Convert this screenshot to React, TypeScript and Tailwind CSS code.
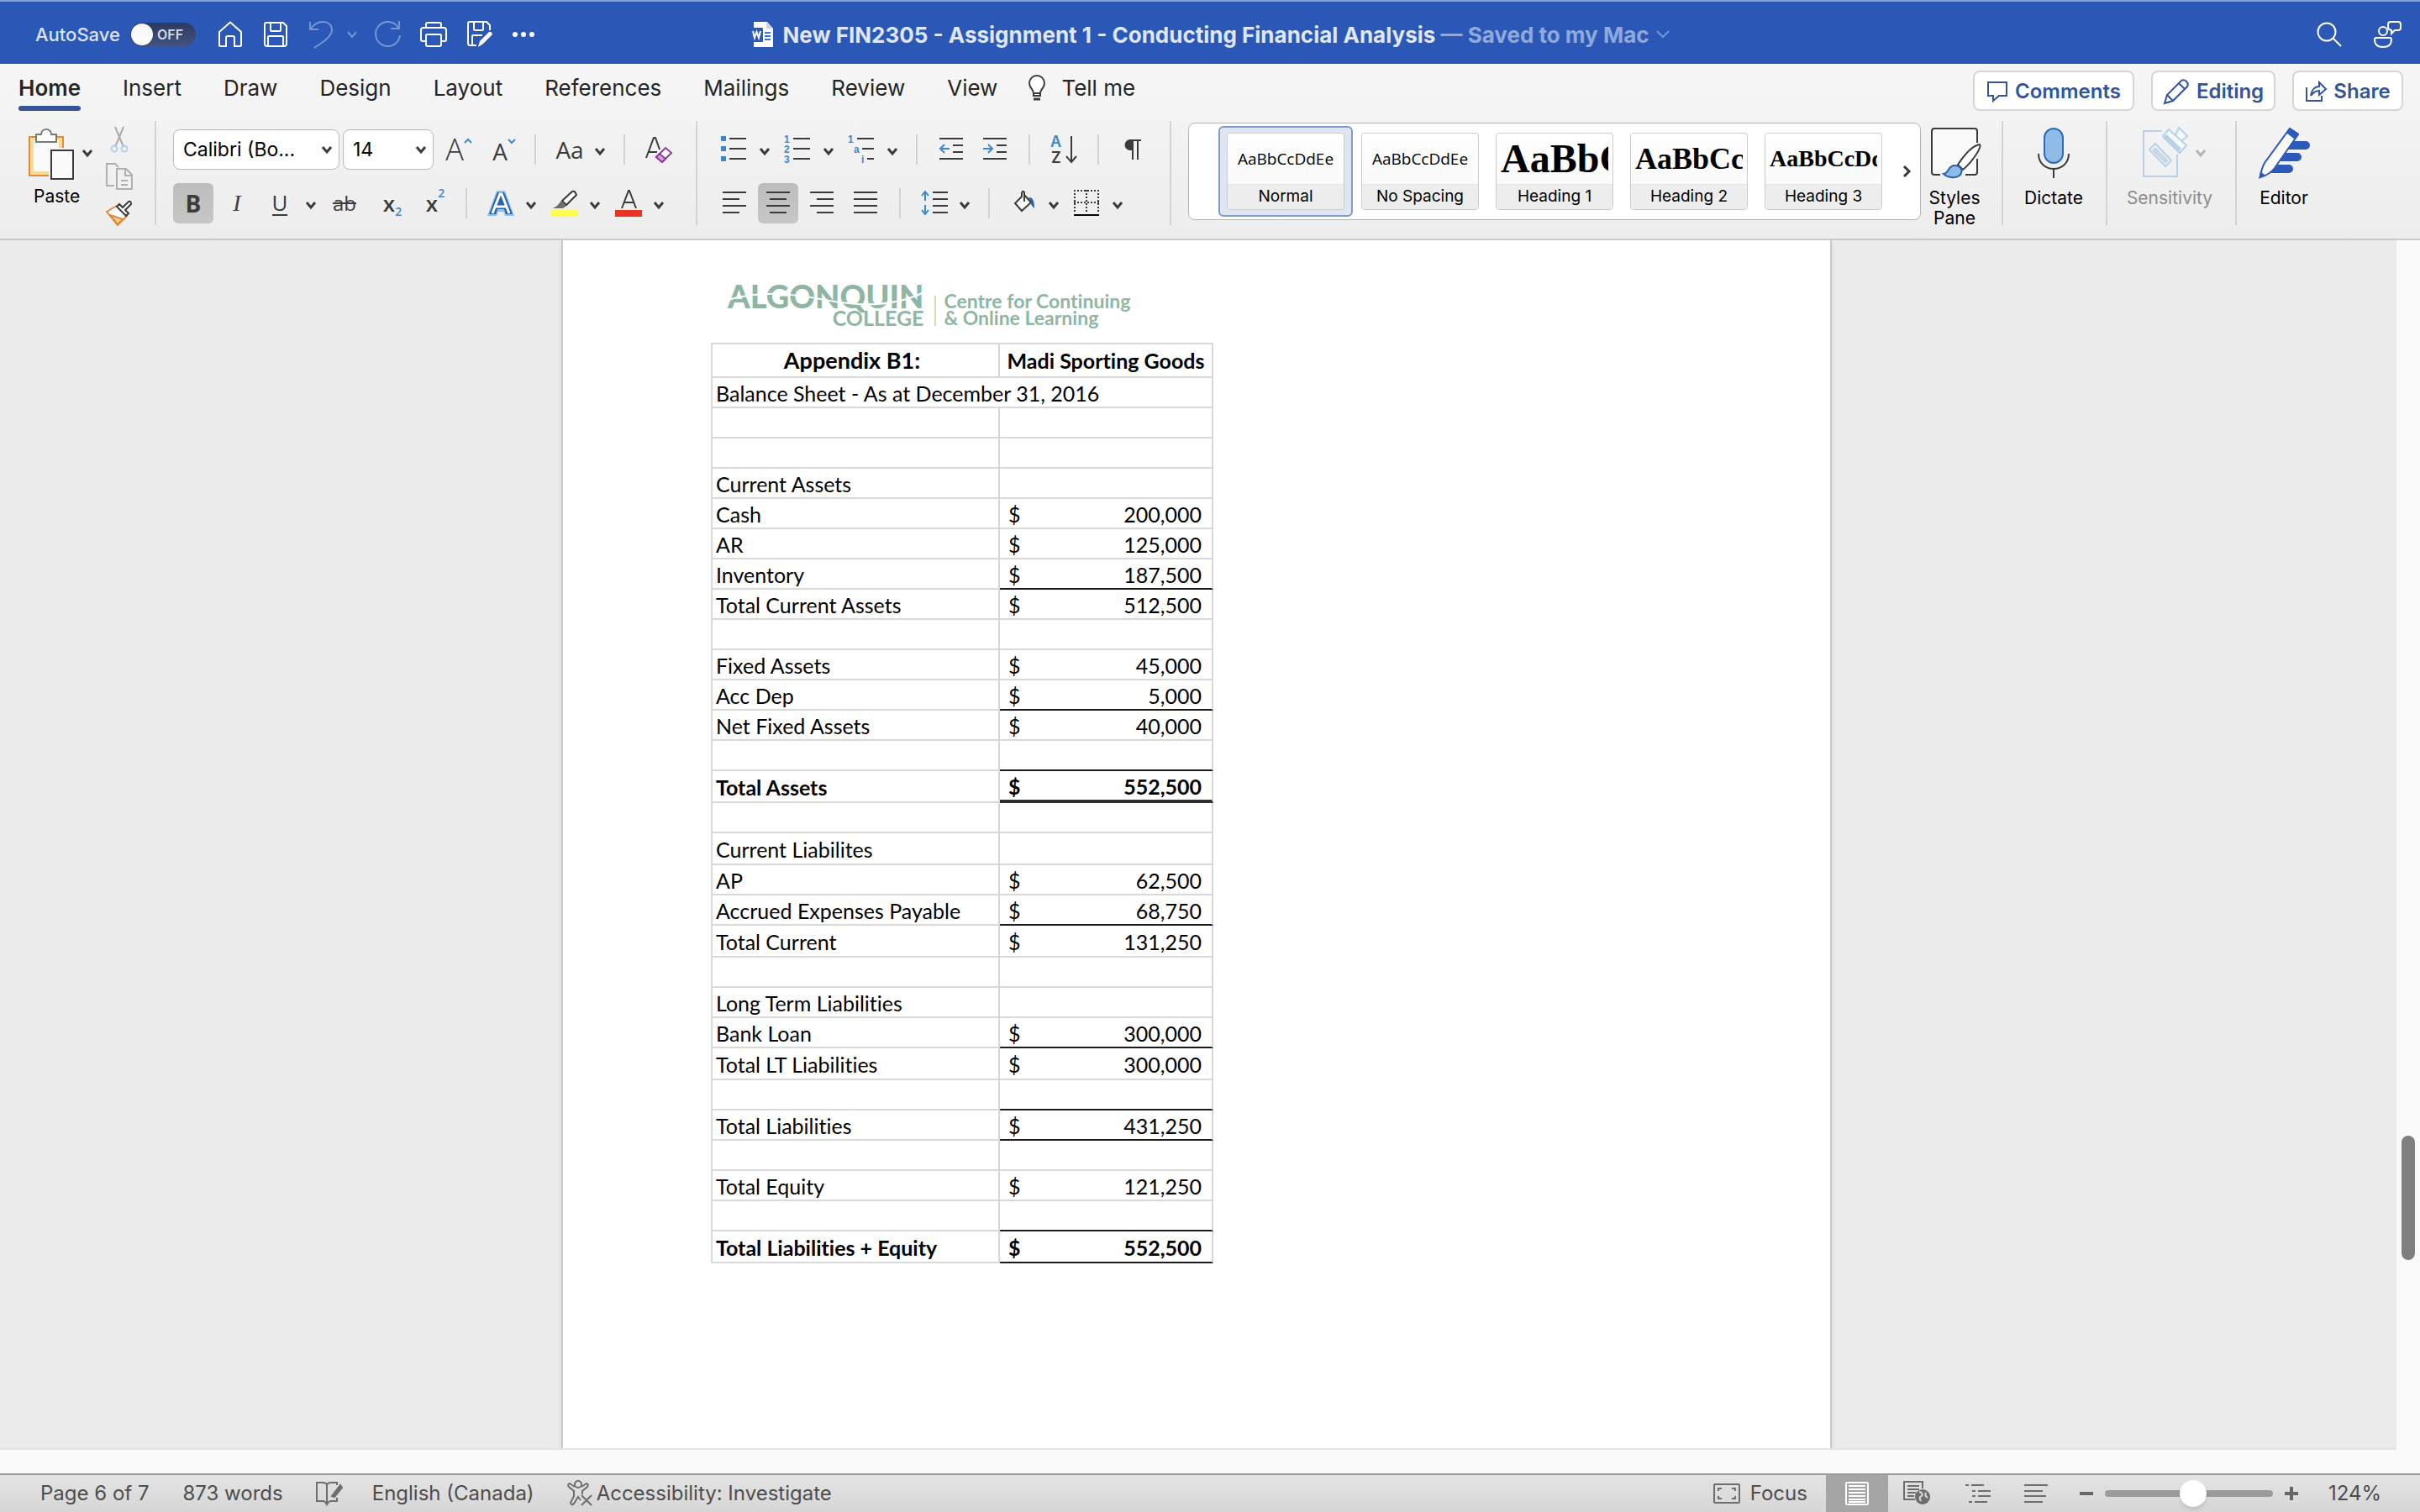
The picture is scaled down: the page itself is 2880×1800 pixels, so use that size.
import React from "react";

type IconProps = { w: number; h: number; className?: string; children: React.ReactNode };

function Icon({ w, h, className = "", children }: IconProps) {
  return (
    <svg
      width={w}
      height={h}
      viewBox={`0 0 ${w} ${h}`}
      fill="none"
      stroke="#3b3b3b"
      strokeWidth="2"
      className={`shrink-0 overflow-visible ${className}`}
      aria-hidden="true"
    >
      {children}
    </svg>
  );
}

const BLUE = "#3f87c9";

function Chevron({ color = "#3b3b3b", className = "" }: { color?: string; className?: string }) {
  return (
    <Icon w={12} h={10} className={className}>
      <path d="M1 2 L6 8 L11 2" stroke={color} strokeWidth="3" />
    </Icon>
  );
}

function MenuArrow({ label, className = "" }: { label: string; className?: string }) {
  return (
    <button aria-label={label} className={`h-8 pt-1 ${className}`}>
      <Chevron />
    </button>
  );
}

function Tool({ label, className = "", children }: { label: string; className?: string; children: React.ReactNode }) {
  return (
    <button aria-label={label} title={label} className={`flex shrink-0 items-center justify-center ${className}`}>
      {children}
    </button>
  );
}

function Rule({ className = "" }: { className?: string }) {
  return <div className={`h-9 w-0.5 shrink-0 bg-[#d3d3d3] ${className}`} />;
}

function GroupRule({ className = "" }: { className?: string }) {
  return <div className={`h-31 w-0.5 shrink-0 bg-[#d3d3d3] ${className}`} />;
}

/* ---------- Title bar ---------- */

function TitleBar() {
  return (
    <header className="grid h-19 shrink-0 grid-cols-[1fr_auto_1fr] items-center border-t-2 border-[#84a0d6] bg-[#2b58b6] pt-1">
      <div className="flex items-center pl-10.5">
        <label htmlFor="autosave" className="w-25 text-[22px] font-medium text-[#dbe3f4]">
          AutoSave
        </label>
        <span className="relative ml-3.25 flex h-7 w-19.5 items-center rounded-full bg-linear-to-b from-[#2b3a5e] to-[#42537f]">
          <input id="autosave" type="checkbox" role="switch" className="absolute inset-0 appearance-none rounded-full" />
          <span className="ml-px size-6.5 rounded-full bg-linear-to-b from-[#f4f4f4] to-white shadow" />
          <span className="ml-1.25 text-base font-semibold text-[#d5dbe8]">OFF</span>
        </span>
        <Tool label="Home" className="ml-6.5">
          <Icon w={30} h={32}>
            <path d="M2 13 L15 1.5 L28 13 V29 Q28 30 27 30 H20 V20 Q20 18 18 18 H12 Q10 18 10 20 V30 H3 Q2 30 2 29 Z" stroke="#fff" />
          </Icon>
        </Tool>
        <Tool label="Save" className="ml-6">
          <Icon w={30} h={32}>
            <path d="M4 2 H24 L28 6 V27 Q28 30 25 30 H5 Q2 30 2 27 V4 Q2 2 4 2 Z M9 2 V11 Q9 12 10 12 H20 Q21 12 21 11 V2 M6 30 V19 Q6 18 7 18 H23 Q24 18 24 19 V30" stroke="#fff" />
          </Icon>
        </Tool>
        <Tool label="Undo" className="ml-6">
          <Icon w={30} h={34}>
            <path d="M2 2 V11 H12 M2 11 C7 4 12 2 17 2 C24 2 28 6 28 12 C28 17 24 20 20 24 L7 33" stroke="#7895d3" />
          </Icon>
        </Tool>
        <Tool label="Undo options" className="ml-4">
          <Icon w={12} h={10}>
            <path d="M1 2 L6 8 L11 2" stroke="#7895d3" />
          </Icon>
        </Tool>
        <Tool label="Repeat" className="ml-5">
          <Icon w={32} h={34}>
            <path d="M30 1 V10 H20 M29 9 A14.5 14.5 0 1 0 31 18" stroke="#7895d3" />
          </Icon>
        </Tool>
        <Tool label="Print" className="ml-5.5">
          <Icon w={34} h={32}>
            <path d="M8 8 V4 Q8 2 10 2 H24 Q26 2 26 4 V8 M8 24 H4 Q2 24 2 22 V11 Q2 8 5 8 H29 Q32 8 32 11 V22 Q32 24 30 24 H26 M8 17 Q8 16 9 16 H25 Q26 16 26 17 V28 Q26 30 24 30 H10 Q8 30 8 28 Z" stroke="#fff" />
          </Icon>
        </Tool>
        <Tool label="Save as" className="ml-5.5">
          <Icon w={32} h={34}>
            <path d="M12 30 H4 Q2 30 2 27 V4 Q2 2 4 2 H24 L28 6 V12 M9 2 V11 Q9 12 10 12 H19 Q20 12 20 11 V2 M7 30 V19 Q7 18 8 18 H19" stroke="#fff" />
            <path d="M14 32 L16 25 L27 14 Q30 13 31 17 L20 28 Z" fill="#fff" stroke="none" />
          </Icon>
        </Tool>
        <Tool label="Customize toolbar" className="ml-5.5">
          <Icon w={28} h={8}>
            <g fill="#fff" stroke="none">
              <circle cx="4" cy="4" r="3" />
              <circle cx="14" cy="4" r="3" />
              <circle cx="24" cy="4" r="3" />
            </g>
          </Icon>
        </Tool>
      </div>
      <div className="flex items-center">
        <Icon w={28} h={32}>
          <path d="M4 1 H20 L27 9 V31 H4 Z" fill="#fff" stroke="none" />
          <path d="M19 1 L27 9 H19 Z" fill="#c9d4ea" stroke="none" />
          <path d="M17 14 H24 M17 18 H24 M17 22 H24" stroke="#3a76d0" />
          <rect x="0" y="8" width="15" height="17" rx="1" fill="#2b5ab8" stroke="none" />
          <path d="M3 12 L5 20 L7.500 13 L10 20 L12 12" stroke="#fff" />
        </Icon>
        <h1 className="ml-2.5 text-[26px] font-bold whitespace-pre text-[#dfe6f5]">
          New FIN2305 - Assignment 1 - Conducting Financial Analysis
          <span className="text-[#8fa9dc]"> — Saved to my Mac</span>
        </h1>
        <Icon w={16} h={10} className="ml-2">
          <path d="M1 1 L8 8 L15 1" stroke="#7593d2" />
        </Icon>
      </div>
      <div className="flex items-center justify-end gap-9 pr-5.5">
        <Tool label="Search">
          <Icon w={32} h={32}>
            <circle cx="13" cy="13" r="10.500" stroke="#fff" />
            <path d="M20.500 20.500 L30 30" stroke="#fff" />
          </Icon>
        </Tool>
        <Tool label="Presence">
          <Icon w={34} h={34}>
            <circle cx="12" cy="13" r="5" stroke="#fff" />
            <path d="M4 21 H20 Q22 21 22 23 C22 29 18 32 12 32 C6 32 2 29 2 23 Q2 21 4 21 Z" stroke="#fff" />
            <path d="M21 2 H30 Q33 2 33 5 V9 Q33 12 30 12 H26 L22 16 V12 Q18 11 18 9 V5 Q18 2 21 2 Z" stroke="#fff" />
          </Icon>
        </Tool>
      </div>
    </header>
  );
}

/* ---------- Ribbon tabs ---------- */

const TABS = ["Home", "Insert", "Draw", "Design", "Layout", "References", "Mailings", "Review", "View"];

function ActionButton({ label, className = "", children }: { label: string; className?: string; children: React.ReactNode }) {
  return (
    <button
      className={`flex h-12 items-center justify-center gap-2 rounded-lg border-2 border-[#d6d6d6] bg-white pt-0.5 text-2xl font-semibold text-[#33539a] ${className}`}
    >
      {children}
      {label}
    </button>
  );
}

function RibbonTabs() {
  return (
    <div className="flex h-14 items-start pr-5 pl-5.5">
      <nav className="flex gap-12.5" aria-label="Ribbon tabs">
        {TABS.map((tab, i) => (
          <button key={tab} className={`pt-3.25 text-[26px]/8 text-[#262626] ${i === 0 ? "font-semibold" : ""}`}>
            {tab}
            <span className={`mt-1.25 block h-1.5 rounded-full ${i === 0 ? "bg-[#35549b]" : ""}`} />
          </button>
        ))}
      </nav>
      <button className="ml-9 flex items-center gap-4.5 pt-3.25 text-[26px]/8 text-[#262626]">
        <Icon w={22} h={32}>
          <path d="M7 22 C7 17 2 16 2 10 A9 9 0 0 1 20 10 C20 16 15 17 15 22 V25 H7 Z M7 22 H15" fill="#fff" />
          <path d="M7 29 H15" strokeWidth="3" />
        </Icon>
        Tell me
      </button>
      <div className="mt-2 ml-auto flex gap-5">
        <ActionButton label="Comments" className="w-48">
          <Icon w={26} h={26}>
            <path d="M2 2 H24 V18 H15 L8 24 V18 H2 Z" stroke="#33539a" />
          </Icon>
        </ActionButton>
        <ActionButton label="Editing" className="w-37">
          <Icon w={32} h={32}>
            <path d="M2 30 L5 20 L22 3 Q25 1 28 4 Q31 7 29 10 L12 27 Z M5 20 L12 27 M19 6 L26 13" stroke="#33539a" />
          </Icon>
        </ActionButton>
        <ActionButton label="Share" className="w-33">
          <Icon w={26} h={26}>
            <path d="M2 8 V24 H20 V18" stroke="#33539a" />
            <path d="M7 18 C8 11 12 7 17 7 V2 L25 10 L17 17 V12 C13 12 10 14 7 18 Z" stroke="#33539a" />
          </Icon>
        </ActionButton>
      </div>
    </div>
  );
}

/* ---------- Ribbon groups ---------- */

function ClipboardGroup() {
  return (
    <div className="flex pl-8.5">
      <button className="mt-1.5 flex w-19 flex-col text-left text-black">
        <span className="flex items-center">
          <Icon w={56} h={64}>
            <path d="M1 13 H41 V59 H1 Z" fill="#f5dc96" stroke="#e08a3c" />
            <path d="M6 17 H36 V54 H6 Z" fill="#fafafa" stroke="none" />
            <path d="M9 10 H15 C15 2 27 2 27 10 H33 V19 H9 Z" fill="#fff" stroke="#7a7a75" />
            <path d="M24 26 H56 V64 H24 Z" fill="#f3f3f3" stroke="none" />
            <path d="M27 29 H53 V63 H27 Z" fill="#fafafa" />
          </Icon>
          <Chevron className="ml-2" />
        </span>
        <span className="mt-1.5 ml-1.5 text-[21px]/7">Paste</span>
      </button>
      <div className="mt-1.5 ml-4 flex flex-col gap-3">
        <Tool label="Cut">
          <Icon w={32} h={32}>
            <path d="M11 1 L21 25 M21 1 L11 25" stroke="#ababab" />
            <circle cx="10" cy="27" r="3.500" stroke="#b3d0e8" />
            <circle cx="22" cy="27" r="3.500" stroke="#b3d0e8" />
          </Icon>
        </Tool>
        <Tool label="Copy">
          <Icon w={32} h={32}>
            <path d="M10 27 H1 V1 H11 L15 5" stroke="#b0b0b0" />
            <path d="M13 7 H24 L31 14 V31 H13 Z M23 7 V15 H31 M18 21 H26 M18 26 H26" stroke="#b0b0b0" />
          </Icon>
        </Tool>
        <Tool label="Format Painter">
          <Icon w={32} h={32}>
            <path d="M1 14 L13 7 L25 19 L14 30 Z" fill="#fff" stroke="#e08a3c" />
            <path d="M5 18 L20 23 L14 29 Z" fill="#f5dc96" stroke="#e08a3c" />
            <path d="M13 8 L16 5 L20 9 L27 2 Q30 1 30 5 L23 12 L27 16 L24 19 Z" fill="#fff" />
          </Icon>
        </Tool>
      </div>
    </div>
  );
}

function Combo({ label, value, className }: { label: string; value: string; className: string }) {
  return (
    <span className={`relative flex h-12 shrink-0 items-center ${className}`}>
      <select
        aria-label={label}
        defaultValue={value}
        className="size-full appearance-none rounded-lg border border-[#b9b9b9] bg-white pl-2.75 text-[23px] text-black"
      >
        <option>{value}</option>
      </select>
      <Chevron className="pointer-events-none absolute right-2.25" />
    </span>
  );
}

function Glyph({ className = "", children }: { className?: string; children: React.ReactNode }) {
  return <span className={`font-['Open_Sans',sans-serif] text-[#3b3b3b] ${className}`}>{children}</span>;
}

function FontGroup() {
  return (
    <div className="mt-2.5 ml-5 flex flex-col gap-4">
      <div className="flex h-12 items-center">
        <Combo label="Font" value="Calibri (Bo..." className="w-49.5" />
        <Combo label="Font size" value="14" className="ml-1 w-27" />
        <Tool label="Increase font size" className="ml-3 w-9">
          <Glyph className="text-4xl/8">
            <span className="font-light">A</span>
          </Glyph>
          <Icon w={10} h={8} className="mb-5">
            <path d="M1 6 L5 2 L9 6" stroke={BLUE} />
          </Icon>
        </Tool>
        <Tool label="Decrease font size" className="ml-5 w-8">
          <Glyph className="mt-1 text-[28px]/8">A</Glyph>
          <Icon w={10} h={8} className="mb-5">
            <path d="M1 2 L5 6 L9 2" stroke={BLUE} />
          </Icon>
        </Tool>
        <Rule className="ml-5" />
        <Tool label="Change case" className="ml-6 w-8">
          <Glyph className="text-[28px]/8">Aa</Glyph>
        </Tool>
        <MenuArrow label="Case options" className="ml-3.5" />
        <Rule className="ml-5.5" />
        <Tool label="Clear formatting" className="ml-6 w-8">
          <Icon w={32} h={32}>
            <path d="M1 26 L10 2 H12 L17 16 M4 19 H14" />
            <path d="M13 25 L24 14 L31 20 L20 31 Z" fill="#fff" stroke="#8e3a9d" />
            <path d="M13 25 L17 21 L24 27 L20 31 Z" fill="#d9a5dc" stroke="#8e3a9d" />
          </Icon>
        </Tool>
      </div>
      <div className="flex h-12 items-center">
        <Tool label="Bold" className="size-12 rounded-md bg-linear-to-b from-[#bdbdbd] to-[#c6c6c6]">
          <Glyph className="text-[28px]/8 font-bold">B</Glyph>
        </Tool>
        <Tool label="Italic" className="ml-4.5 w-5">
          <span className="font-['Liberation_Serif',serif] text-[28px]/8 text-[#3b3b3b] italic">I</span>
        </Tool>
        <Tool label="Underline" className="ml-7.5 w-5.5">
          <Glyph className="border-b-2 border-[#3b3b3b] text-[26px]/7">U</Glyph>
        </Tool>
        <MenuArrow label="Underline options" className="ml-5" />
        <Tool label="Strikethrough" className="ml-4.5 w-8">
          <Glyph className="text-2xl/8 line-through">ab</Glyph>
        </Tool>
        <Tool label="Subscript" className="ml-7 w-6.5">
          <Glyph className="text-[26px]/8 font-semibold">x</Glyph>
          <Glyph className="mt-5 text-sm/4 font-semibold">
            <span className="text-[#3f87c9]">2</span>
          </Glyph>
        </Tool>
        <Tool label="Superscript" className="ml-6.5 w-6">
          <Glyph className="text-[26px]/8 font-semibold">x</Glyph>
          <Glyph className="mb-6 text-sm/4 font-semibold">
            <span className="text-[#3f87c9]">2</span>
          </Glyph>
        </Tool>
        <Rule className="ml-6" />
        <Tool label="Text effects" className="ml-6 w-8">
          <Icon w={32} h={32}>
            <path d="M11 1 H21 L32 31 H21 L19 26 H13 L11 31 H0 Z" fill="#8fc0ec" stroke="none" />
            <path d="M12 3 H20 L30 29 H22 L20 23 H12 L10 29 H2 Z" fill="#2764b0" stroke="none" />
            <path d="M6 28 L15 5 H17 L26 28 M10 20 H22" stroke="#fff" strokeWidth="3" />
          </Icon>
        </Tool>
        <MenuArrow label="Text effect options" className="ml-3.5" />
        <Tool label="Highlight" className="ml-4.5 w-8">
          <Icon w={32} h={32}>
            <path d="M13 13 L25 2 Q28 1 29 4 L30 6 L18 18 Z" fill="#fff" />
            <path d="M12 13 L18 19 L14 22 H2 L7 19 Z" fill="#6e6e6e" stroke="none" />
            <path d="M0 24 H32 V32 H0 Z" fill="#fffb4f" stroke="none" />
          </Icon>
        </Tool>
        <MenuArrow label="Highlight options" className="ml-3.5" />
        <Tool label="Font color" className="ml-4.5 w-8">
          <Icon w={32} h={32}>
            <path d="M8 22 L16 1 H17 L25 22 M11 15 H22" />
            <path d="M0 24 H32 V32 H0 Z" fill="#ea3323" stroke="none" />
          </Icon>
        </Tool>
        <MenuArrow label="Font color options" className="ml-3.5" />
      </div>
    </div>
  );
}

function ListIcon({ marks }: { marks: string[] }) {
  return (
    <Icon w={32} h={32}>
      <path d="M12 3 H32 M12 15 H32 M12 27 H32" />
      <g fill={BLUE} stroke="none" fontSize="12" fontWeight="700" fontFamily="Liberation Sans, sans-serif">
        {marks.map((m, i) => (
          <text key={m} x="1" y={8 + i * 12}>
            {m}
          </text>
        ))}
      </g>
    </Icon>
  );
}

function ParagraphGroup() {
  return (
    <div className="mt-2.5 ml-7 flex flex-col gap-4">
      <div className="flex h-12 items-center">
        <Tool label="Bullets" className="w-7.5">
          <Icon w={30} h={32}>
            <path d="M0 0 H6 V6 H0 Z M0 12 H6 V18 H0 Z M0 24 H6 V30 H0 Z" fill={BLUE} stroke="none" />
            <path d="M10 3 H30 M10 15 H30 M10 27 H30" />
          </Icon>
        </Tool>
        <MenuArrow label="Bullet options" className="ml-4" />
        <Tool label="Numbering" className="ml-4 w-8">
          <ListIcon marks={["1", "2", "3"]} />
        </Tool>
        <MenuArrow label="Numbering options" className="ml-4" />
        <Tool label="Multilevel list" className="ml-4 w-8">
          <Icon w={32} h={32}>
            <path d="M12 3 H32 M18 15 H32 M24 27 H32" />
            <g fill={BLUE} stroke="none" fontSize="12" fontWeight="700" fontFamily="Liberation Sans, sans-serif">
              <text x="1" y="8">1</text>
              <text x="8" y="20">a</text>
              <text x="17" y="32">i</text>
            </g>
          </Icon>
        </Tool>
        <MenuArrow label="Multilevel options" className="ml-4" />
        <Rule className="ml-5.5" />
        <Tool label="Decrease indent" className="ml-6.5">
          <Icon w={28} h={32}>
            <path d="M0 3 H28 M16 11 H28 M16 19 H28 M0 27 H28" />
            <path d="M12 15 H1 M6 10 L1 15 L6 20" stroke={BLUE} />
          </Icon>
        </Tool>
        <Tool label="Increase indent" className="ml-6">
          <Icon w={28} h={32}>
            <path d="M0 3 H28 M16 11 H28 M16 19 H28 M0 27 H28" />
            <path d="M0 15 H11 M6 10 L11 15 L6 20" stroke={BLUE} />
          </Icon>
        </Tool>
        <Rule className="ml-6.5" />
        <Tool label="Sort" className="ml-6">
          <Icon w={32} h={34}>
            <g stroke="none" fontSize="18" fontWeight="600" fontFamily="Inter, sans-serif">
              <text x="0" y="14" fill={BLUE}>A</text>
              <text x="1" y="33" fill="#3b3b3b">Z</text>
            </g>
            <path d="M25 1 V31 M19 25 L25 32 L31 25" />
          </Icon>
        </Tool>
        <Rule className="ml-6" />
        <Tool label="Show paragraph marks" className="ml-7">
          <Icon w={24} h={32}>
            <path d="M22 4 H9 A6 6 0 0 0 9 17 H11 V4 Z" fill="#3b3b3b" stroke="none" />
            <path d="M8 5 H22 M12 4 V28 M18 4 V28" />
          </Icon>
        </Tool>
      </div>
      <div className="flex h-12 items-center">
        <Tool label="Align left" className="ml-0.5">
          <Icon w={28} h={28}>
            <path d="M0 1 H28 M0 9 H20 M0 17 H28 M0 25 H20" />
          </Icon>
        </Tool>
        <Tool label="Center" className="ml-3.5 size-12 rounded-md bg-linear-to-b from-[#bdbdbd] to-[#c6c6c6]">
          <Icon w={28} h={28}>
            <path d="M0 1 H28 M4 9 H24 M0 17 H28 M4 25 H24" />
          </Icon>
        </Tool>
        <Tool label="Align right" className="ml-3.5">
          <Icon w={28} h={28}>
            <path d="M0 1 H28 M8 9 H28 M0 17 H28 M8 25 H28" />
          </Icon>
        </Tool>
        <Tool label="Justify" className="ml-6">
          <Icon w={28} h={28}>
            <path d="M0 1 H28 M0 9 H28 M0 17 H28 M0 25 H28" />
          </Icon>
        </Tool>
        <Rule className="ml-6.5" />
        <Tool label="Line spacing" className="ml-6">
          <Icon w={32} h={32}>
            <path d="M14 3 H32 M14 11 H32 M14 19 H32 M14 27 H32" />
            <path d="M5 2 V13 M1 7 L5 2 L9 7 M5 18 V29 M1 24 L5 29 L9 24" stroke={BLUE} />
          </Icon>
        </Tool>
        <MenuArrow label="Spacing options" className="ml-3.5" />
        <Rule className="ml-5.5" />
        <Tool label="Shading" className="ml-6.5">
          <Icon w={30} h={32}>
            <path d="M12 8 L4 16 L12 25 L23 15 L15 6 V3 Q13 0 12 4 Z M15 6 V14" fill="#fafafa" />
            <path d="M20 9 Q27 8 27 22 Q22 18 23 14 Z" fill="#2b62b0" stroke="none" />
          </Icon>
        </Tool>
        <MenuArrow label="Shading options" className="ml-3.5" />
        <Tool label="Borders" className="ml-4.5">
          <Icon w={30} h={32}>
            <path d="M0 1 H30 M0 15 H30 M1 0 V28 M15 0 V28 M29 0 V28" strokeDasharray="2 2" />
            <path d="M0 30 H30" stroke="#000" />
          </Icon>
        </Tool>
        <MenuArrow label="Border options" className="ml-4" />
      </div>
    </div>
  );
}

const CALIBRI = "font-['Open_Sans',sans-serif] text-[19px]";
const SERIF = "font-['Liberation_Serif',serif] font-bold text-left";

const STYLES = [
  { name: "Normal", sample: "AaBbCcDdEe", font: CALIBRI },
  { name: "No Spacing", sample: "AaBbCcDdEe", font: CALIBRI },
  { name: "Heading 1", sample: "AaBbCc", font: `${SERIF} text-[48px]` },
  { name: "Heading 2", sample: "AaBbCc", font: `${SERIF} text-4xl` },
  { name: "Heading 3", sample: "AaBbCcDd", font: `${SERIF} text-[28px]` },
];

function StyleGallery() {
  return (
    <div className="mt-0.5 ml-5 flex h-29 min-w-0 flex-1 items-center rounded-lg border border-[#b5b5b5] bg-white pl-8.75">
      <div className="flex min-w-0 flex-1 overflow-hidden">
        {STYLES.map((s, i) => (
          <button
            key={s.name}
            className={`h-27 w-40 shrink-0 rounded-md border-2 px-2 py-1.5 ${
              i === 0 ? "border-[#7f9acb] bg-[#dfe6f2]" : "border-transparent"
            }`}
          >
            <span className="flex h-23 flex-col overflow-hidden rounded-sm border border-[#cccccc] bg-linear-to-b from-white to-[#f7f7f7]">
              <span className="mx-1.25 flex min-h-0 flex-1 items-center overflow-hidden">
                <span className={`w-full leading-none whitespace-nowrap text-black ${s.font}`}>{s.sample}</span>
              </span>
              <span className="h-7.5 border-t border-[#e4e4e4] bg-[#ededed] text-[19px]/7 text-black">{s.name}</span>
            </span>
          </button>
        ))}
      </div>
      <Tool label="More styles" className="mr-1 w-6">
        <Icon w={10} h={14}>
          <path d="M2 1 L8 7 L2 13" strokeWidth="3" />
        </Icon>
      </Tool>
    </div>
  );
}

function BigButton({ label, className, children }: { label: string; className: string; children: React.ReactNode }) {
  return (
    <button className={`mt-1.5 flex shrink-0 flex-col items-center text-[21px]/6 ${className}`}>
      <span className="mb-2.5 flex h-16 items-center">{children}</span>
      {label}
    </button>
  );
}

function RibbonBody() {
  return (
    <div className="mt-3 flex h-31 items-start">
      <ClipboardGroup />
      <GroupRule className="ml-6.5" />
      <FontGroup />
      <GroupRule className="ml-7" />
      <ParagraphGroup />
      <GroupRule className="ml-8" />
      <StyleGallery />
      <BigButton label="Styles Pane" className="ml-1.5 w-17 text-black">
        <Icon w={60} h={62} className="ml-1">
          <path d="M1 4 Q1 2 3 2 H53 Q55 2 55 4 V56 H1 Z" fill="#fafafa" stroke="none" />
          <path d="M11 57 H4 Q1 57 1 54 V5 Q1 2 4 2 H52 Q55 2 55 5 V19 M55 38 V54 Q55 57 52 57 H41" />
          <path d="M32 45 C40 33 50 22 58 21 C61 24 49 42 38 51 Z" fill="#fff" />
          <path d="M15 56 C22 55 20 46 28 46 C36 46 39 53 34 58 C29 62 19 60 15 56 Z" fill="#8fbce6" stroke="#2b62ae" />
        </Icon>
      </BigButton>
      <GroupRule className="ml-5.5" />
      <BigButton label="Dictate" className="ml-5.5 w-19 text-black">
        <Icon w={40} h={62}>
          <rect x="9" y="2" width="22" height="41" rx="11" fill="#8fbce6" stroke="#2b6cb5" />
          <path d="M2 32 C2 56 38 56 38 32 M20 50 V61" />
        </Icon>
      </BigButton>
      <GroupRule className="ml-6" />
      <BigButton label="Sensitivity" className="ml-5.5 w-26 text-[#8c8c8c]">
        <Icon w={56} h={62} className="ml-2.5">
          <path d="M24 5 H2 V59 H42 V33" stroke="#b7d2e8" />
          <path d="M16 20 L9 27 L28 47 L35 40 Z M16 26 L14 28 L28 42 L30 40 Z" stroke="#b7d2e8" />
          <path d="M32 3 L53 22 L45 31 L25 11 Z M40 10 L44 1 L54 11 L47 17" fill="#f5f9fc" stroke="#b7d2e8" />
          <path d="M27 11 L45 28" stroke="#b7d2e8" strokeWidth="6" />
        </Icon>
        <Chevron color="#b4b4b4" className="ml-2" />
      </BigButton>
      <GroupRule className="ml-6.5" />
      <BigButton label="Editor" className="mr-32.5 ml-6 w-16 text-black">
        <Icon w={62} h={62}>
          <path d="M34 22 H57 M26 36 H47 M16 50 H37" stroke="#2b5ab8" strokeWidth="10" strokeLinecap="round" />
          <path d="M38 2 L48 9 L20 49 Q14 57 3 60 Q4 50 8 43 Z" fill="#fafafa" stroke="#2b5ab8" />
          <path d="M38 1 L49 8 L44 15 L34 7 Z M1 62 L3 53 L9 58 Z" fill="#2b5ab8" stroke="none" />
        </Icon>
      </BigButton>
    </div>
  );
}

/* ---------- Document ---------- */

type Row = {
  label?: string;
  value?: string;
  bold?: boolean;
  line?: "single" | "double";
  height?: string;
};

const ROWS: Row[] = [
  {},
  {},
  { label: "Current Assets" },
  { label: "Cash", value: "200,000" },
  { label: "AR", value: "125,000" },
  { label: "Inventory", value: "187,500", line: "single" },
  { label: "Total Current Assets", value: "512,500" },
  {},
  { label: "Fixed Assets", value: "45,000" },
  { label: "Acc Dep", value: "5,000", line: "single" },
  { label: "Net Fixed Assets", value: "40,000" },
  { line: "single" },
  { label: "Total Assets", value: "552,500", bold: true, line: "double", height: "h-9.5" },
  {},
  { label: "Current Liabilites", height: "h-9.5" },
  { label: "AP", value: "62,500" },
  { label: "Accrued Expenses Payable", value: "68,750", line: "single" },
  { label: "Total Current", value: "131,250", height: "h-9.5" },
  {},
  { label: "Long Term Liabilities" },
  { label: "Bank Loan", value: "300,000", line: "single" },
  { label: "Total LT Liabilities", value: "300,000", height: "h-9.5" },
  { line: "single" },
  { label: "Total Liabilities", value: "431,250", line: "single" },
  {},
  { label: "Total Equity", value: "121,250" },
  { line: "single" },
  { label: "Total Liabilities + Equity", value: "552,500", bold: true, line: "single", height: "h-9.5" },
];

function lineClass(line?: "single" | "double") {
  if (line === "double") return "border-b-4 border-b-[#2e2e2e] pt-0.5";
  if (line === "single") return "border-b-2 border-b-[#1c1c1c] pt-0.5";
  return "border-b-2 border-b-[#d9d9d9] pt-0.5";
}

function BalanceSheet() {
  return (
    <table className="w-149.5 table-fixed border-separate border-spacing-0 border-t-2 border-l-2 border-[#d9d9d9] text-[25px]/8 text-black [font-variant-ligatures:none]">
      <colgroup>
        <col className="w-85.5" />
        <col />
      </colgroup>
      <thead>
        <tr>
          <th className="h-10 border-r-2 border-b-2 border-[#d9d9d9] p-0 pr-2 text-[27px]/8 font-bold">Appendix B1:</th>
          <th className="border-r-2 border-b-2 border-[#d9d9d9] p-0 text-[25px]/8 font-bold whitespace-nowrap">Madi Sporting Goods</th>
        </tr>
        <tr>
          <td colSpan={2} className="h-9 border-r-2 border-b-2 border-[#d9d9d9] p-0 pt-0.5 pl-1">
            Balance Sheet - As at December 31, 2016
          </td>
        </tr>
      </thead>
      <tbody>
        {ROWS.map((row, i) => (
          <tr key={i} className={row.bold ? "font-bold" : ""}>
            <td className={`border-r-2 border-b-2 border-[#d9d9d9] p-0 pt-0.5 pl-1 ${row.height ?? "h-9"}`}>{row.label}</td>
            <td className={`border-r-2 border-r-[#d9d9d9] px-0 pb-0 ${lineClass(row.line)}`}>
              {row.value && (
                <span className="flex justify-between pr-3 pl-2.5">
                  <span>$</span>
                  <span>{row.value}</span>
                </span>
              )}
            </td>
          </tr>
        ))}
      </tbody>
    </table>
  );
}

function CollegeLogo() {
  return (
    <div className="flex items-end pl-5 font-['Lato',sans-serif] font-bold text-[#8fb6a2] [font-variant-ligatures:none]">
      <div className="flex flex-col items-end">
        <div className="relative text-[38px]/8 font-black">
          ALGONQUIN
          <svg viewBox="0 0 232 32" className="absolute inset-0 size-full" fill="none" stroke="#fff" strokeWidth="2" preserveAspectRatio="none" aria-hidden="true">
            <path d="M0 21 C40 10 75 13 115 21 S195 30 232 12" />
          </svg>
        </div>
        <div className="text-[25px]/5">COLLEGE</div>
      </div>
      <div className="mr-2.5 ml-3 h-9 w-0.5 bg-[#cfdfb4]" />
      <div className="text-[23px]/5">
        Centre for Continuing
        <br />
        &amp; Online Learning
      </div>
    </div>
  );
}

function DocumentArea() {
  return (
    <main className="flex min-h-0 flex-1">
      <div className="min-w-0 flex-1 overflow-hidden border-b-2 border-[#e4e4e4] bg-[#ebebeb] pr-1">
        <article className="mx-auto h-full w-378 border-x-2 border-[#cacaca] bg-white pt-12.5 pl-44 font-['Lato',sans-serif] shadow-md">
          <CollegeLogo />
          <div className="mt-5">
            <BalanceSheet />
          </div>
        </article>
      </div>
      <div className="relative w-7 bg-[#fafafa]">
        <div className="absolute inset-x-1.5 top-[74%] h-37 rounded-full bg-[#7f7f7f]" />
      </div>
    </main>
  );
}

/* ---------- Status bar ---------- */

function StatusBar() {
  return (
    <footer className="flex h-11.5 shrink-0 items-center border-t-2 border-[#9b9b9b] bg-linear-to-b from-[#e4e4e4] to-[#d6d6d6] pr-11.5 pl-12 text-2xl text-[#4d4d4d]">
      <button>Page 6 of 7</button>
      <button className="ml-10">873 words</button>
      <Tool label="Proofing" className="ml-9.5">
        <Icon w={34} h={30}>
          <path d="M14 4 Q12 2 9 2 H2 V24 H9 Q12 24 14 28 Q16 24 19 24 H26 V20 M14 4 Q16 2 19 2 H26 V5 M14 4 V28" stroke="#6e6e6e" />
          <path d="M20 18 L30 5 L32 8 L23 19 Z" fill="#6e6e6e" stroke="#6e6e6e" />
        </Icon>
      </Tool>
      <button className="ml-8.5">English (Canada)</button>
      <button className="ml-9.5 flex items-center gap-1">
        <Icon w={32} h={32}>
          <circle cx="14" cy="5" r="4" stroke="#6e6e6e" />
          <path d="M10 8 L4 4 Q1 5 3 8 L9 13 V19 L5 27 Q6 31 9 28 L14 20 L17 24 M18 8 L24 4 Q27 5 25 8 L19 13 V17 M18 18 L30 30 M30 18 L18 30" stroke="#6e6e6e" />
        </Icon>
        Accessibility: Investigate
      </button>
      <button className="ml-auto flex items-center gap-3">
        <Icon w={32} h={24}>
          <rect x="1" y="1" width="30" height="22" rx="1" stroke="#6e6e6e" />
          <path d="M6 9 V6 H10 M22 6 H26 V9 M26 15 V18 H22 M10 18 H6 V15" stroke="#6e6e6e" />
        </Icon>
        Focus
      </button>
      <Tool label="Print layout" className="ml-5.5 h-full w-18.5 bg-[#a5a5a5]">
        <Icon w={28} h={28}>
          <rect x="1" y="1" width="26" height="26" rx="1" stroke="#fff" />
          <path d="M4 5 H24 M4 9 H24 M4 13 H24 M4 17 H24 M4 21 H24 M4 24 H24" stroke="#fff" />
        </Icon>
      </Tool>
      <Tool label="Web layout" className="ml-4.5">
        <Icon w={34} h={30}>
          <path d="M14 22 H1 V1 H23 V9 M5 6 H19 M5 10 H19 M5 14 H15 M5 18 H13" stroke="#6e6e6e" />
          <circle cx="23" cy="19" r="9" fill="#6e6e6e" stroke="none" />
          <path d="M19 13 Q24 14 22 18 Q18 19 21 24 M27 14 Q25 18 29 20" stroke="#dcdcdc" />
        </Icon>
      </Tool>
      <Tool label="Outline" className="ml-10">
        <Icon w={30} h={24}>
          <path d="M0 2 H4 M7 2 H22 M8 9 H12 M15 9 H30 M8 15 H12 M15 15 H30 M4 22 H8 M11 22 H26" stroke="#6e6e6e" />
        </Icon>
      </Tool>
      <Tool label="Draft" className="ml-10">
        <Icon w={28} h={24}>
          <path d="M0 2 H28 M0 9 H22 M0 15 H26 M0 22 H22" stroke="#6e6e6e" />
        </Icon>
      </Tool>
      <Tool label="Zoom out" className="ml-9.5">
        <Icon w={16} h={16}>
          <path d="M0 8 H16" strokeWidth="4" stroke="#666" />
        </Icon>
      </Tool>
      <input
        type="range"
        aria-label="Zoom"
        min="0"
        max="100"
        defaultValue="53"
        className="mx-3.5 h-2 w-50 appearance-none rounded-full bg-[#9b9b9b] [&::-webkit-slider-thumb]:size-8 [&::-webkit-slider-thumb]:appearance-none [&::-webkit-slider-thumb]:rounded-full [&::-webkit-slider-thumb]:bg-white [&::-webkit-slider-thumb]:shadow-md"
      />
      <Tool label="Zoom in">
        <Icon w={16} h={16}>
          <path d="M0 8 H16 M8 0 V16" strokeWidth="4" stroke="#666" />
        </Icon>
      </Tool>
      <button className="ml-9">124%</button>
    </footer>
  );
}

export default function App() {
  return (
    <div className="flex h-screen flex-col overflow-hidden bg-[#fafafa] font-['Inter',sans-serif]">
      <TitleBar />
      <section aria-label="Ribbon" className="shrink-0 border-b-2 border-[#c9c9c9] bg-linear-to-b from-[#f6f6f6] to-[#ededed] pb-4">
        <RibbonTabs />
        <RibbonBody />
      </section>
      <DocumentArea />
      <div className="h-7 shrink-0 bg-[#fafafa]" />
      <StatusBar />
    </div>
  );
}
